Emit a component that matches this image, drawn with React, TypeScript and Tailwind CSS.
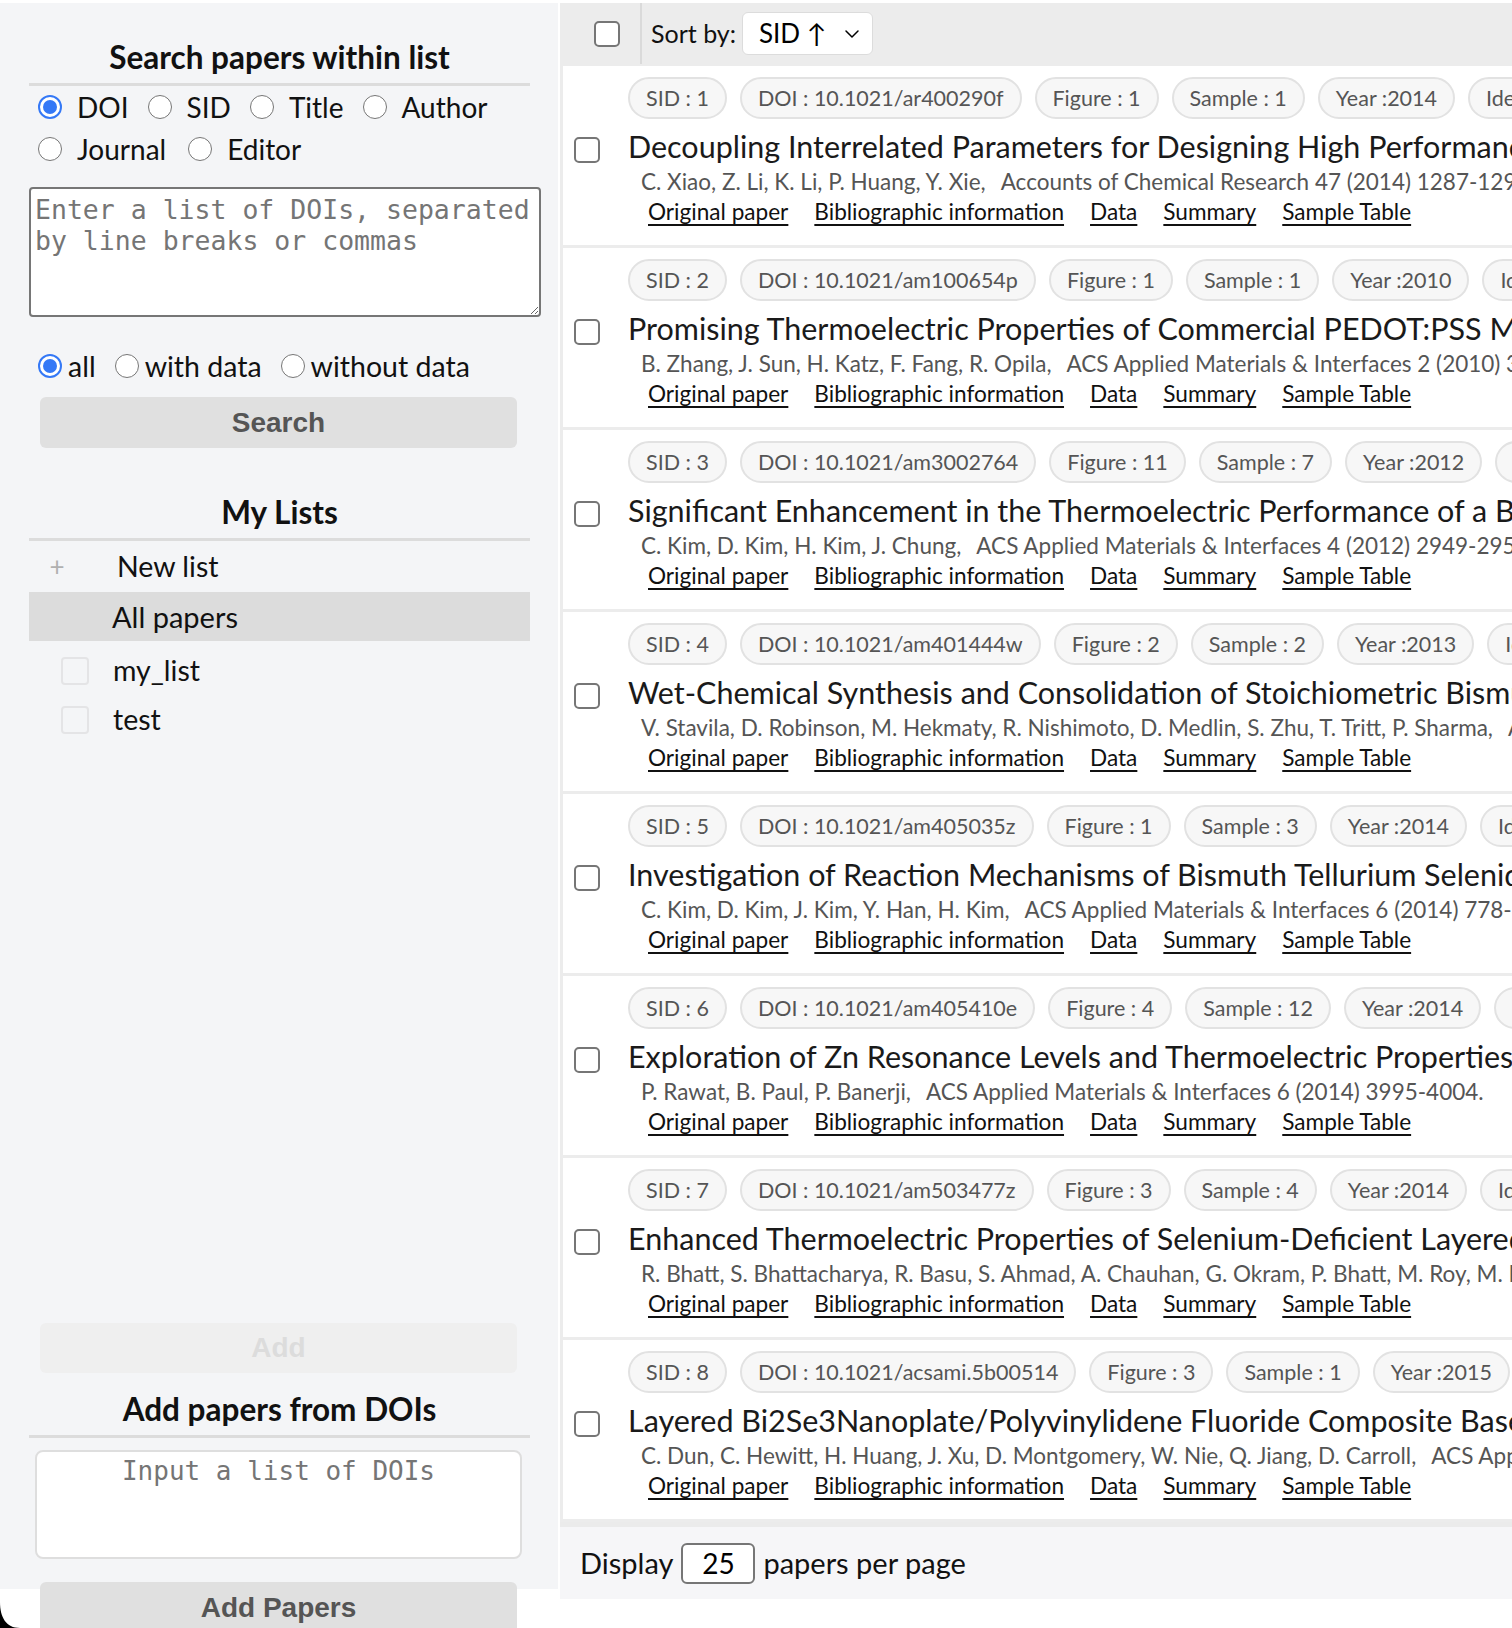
import React from 'react'
import {ChevronDown} from 'lucide-react'

type Paper = {
  sid: number
  doi: string
  figure: number
  sample: number
  year: number
  title: string
  authors: string
  journal: string
}

const papers: Paper[] = [
  {sid: 1, doi: '10.1021/ar400290f', figure: 1, sample: 1, year: 2014, title: 'Decoupling Interrelated Parameters for Designing High Performance Thermoelectric Materials', authors: 'C. Xiao, Z. Li, K. Li, P. Huang, Y. Xie,', journal: 'Accounts of Chemical Research 47 (2014) 1287-1295.'},
  {sid: 2, doi: '10.1021/am100654p', figure: 1, sample: 1, year: 2010, title: 'Promising Thermoelectric Properties of Commercial PEDOT:PSS Materials and Their Bi2Te3 Powder Composites', authors: 'B. Zhang, J. Sun, H. Katz, F. Fang, R. Opila,', journal: 'ACS Applied Materials & Interfaces 2 (2010) 3170-3178.'},
  {sid: 3, doi: '10.1021/am3002764', figure: 11, sample: 7, year: 2012, title: 'Significant Enhancement in the Thermoelectric Performance of a Bismuth Telluride Nanocompound', authors: 'C. Kim, D. Kim, H. Kim, J. Chung,', journal: 'ACS Applied Materials & Interfaces 4 (2012) 2949-2954.'},
  {sid: 4, doi: '10.1021/am401444w', figure: 2, sample: 2, year: 2013, title: 'Wet-Chemical Synthesis and Consolidation of Stoichiometric Bismuth Telluride Nanoparticles', authors: 'V. Stavila, D. Robinson, M. Hekmaty, R. Nishimoto, D. Medlin, S. Zhu, T. Tritt, P. Sharma,', journal: 'ACS Applied Materials & Interfaces 5 (2013) 6678-6686.'},
  {sid: 5, doi: '10.1021/am405035z', figure: 1, sample: 3, year: 2014, title: 'Investigation of Reaction Mechanisms of Bismuth Tellurium Selenide Nanocomposite', authors: 'C. Kim, D. Kim, J. Kim, Y. Han, H. Kim,', journal: 'ACS Applied Materials & Interfaces 6 (2014) 778-785.'},
  {sid: 6, doi: '10.1021/am405410e', figure: 4, sample: 12, year: 2014, title: 'Exploration of Zn Resonance Levels and Thermoelectric Properties in I-Doped ZnO/Zn3P2', authors: 'P. Rawat, B. Paul, P. Banerji,', journal: 'ACS Applied Materials & Interfaces 6 (2014) 3995-4004.'},
  {sid: 7, doi: '10.1021/am503477z', figure: 3, sample: 4, year: 2014, title: 'Enhanced Thermoelectric Properties of Selenium-Deficient Layered TiSe2-x', authors: 'R. Bhatt, S. Bhattacharya, R. Basu, S. Ahmad, A. Chauhan, G. Okram, P. Bhatt, M. Roy, M. Navaneethan,', journal: 'ACS Applied Materials & Interfaces 6 (2014) 18619-18625.'},
  {sid: 8, doi: '10.1021/acsami.5b00514', figure: 3, sample: 1, year: 2015, title: 'Layered Bi2Se3Nanoplate/Polyvinylidene Fluoride Composite Based n-type Thermoelectric Fabrics', authors: 'C. Dun, C. Hewitt, H. Huang, J. Xu, D. Montgomery, W. Nie, Q. Jiang, D. Carroll,', journal: 'ACS Applied Materials & Interfaces 7 (2015) 7054-7059.'},
]

function Radio({checked}: {checked?: boolean}) {
  if (checked) {
    return (
      <span className="flex h-[24px] w-[24px] shrink-0 items-center justify-center rounded-full border-[2px] border-[#3478f6] bg-white">
        <span className="h-[14px] w-[14px] rounded-full bg-[#3478f6]" />
      </span>
    )
  }
  return <span className="h-[24px] w-[24px] shrink-0 rounded-full border-[1.5px] border-[#767676] bg-white" />
}

function RadioItem({label, checked, gap = 'gap-[15px]', mr = 'mr-[19px]'}: {label: string; checked?: boolean; gap?: string; mr?: string}) {
  return (
    <label className={`flex items-center ${gap} ${mr}`}>
      <Radio checked={checked} />
      <span>{label}</span>
    </label>
  )
}

function Chip({children}: {children: React.ReactNode}) {
  return (
    <span className="flex h-[42px] shrink-0 items-center rounded-full border-[2px] border-[#e2e2e2] bg-[#f7f7f7] px-[16px] text-[21.5px] text-[#555]">
      {children}
    </span>
  )
}

function PaperCard({paper}: {paper: Paper}) {
  return (
    <div className="flex h-[182px] flex-col overflow-hidden border-b-[3px] border-[#ececec] bg-white pl-[11px]">
      <div className="ml-[54px] mt-[11px] flex h-[42px] gap-[13px] whitespace-nowrap">
        <Chip>SID : {paper.sid}</Chip>
        <Chip>DOI : {paper.doi}</Chip>
        <Chip>Figure : {paper.figure}</Chip>
        <Chip>Sample : {paper.sample}</Chip>
        <Chip>Year :{paper.year}</Chip>
        <Chip>Identifier</Chip>
      </div>
      <div className="mt-[7px] flex h-[40px] items-center whitespace-nowrap">
        <span className="mt-[8px] h-[26px] w-[26px] shrink-0 rounded-[5px] border-[2px] border-[#767676] bg-white" />
        <span className="ml-[28px] text-[30.5px] leading-[40px] text-[#1a1a1a]">{paper.title}</span>
      </div>
      <div className="ml-[67px] mt-[1px] flex h-[30px] items-center gap-[15px] whitespace-nowrap text-[22.5px] text-[#555]">
        <span>{paper.authors}</span>
        <span>{paper.journal}</span>
      </div>
      <div className="ml-[74px] flex h-[30px] items-center gap-[26px] whitespace-nowrap text-[22.6px] text-[#111]">
        <a className="underline underline-offset-[4px]">Original paper</a>
        <a className="underline underline-offset-[4px]">Bibliographic information</a>
        <a className="underline underline-offset-[4px]">Data</a>
        <a className="underline underline-offset-[4px]">Summary</a>
        <a className="underline underline-offset-[4px]">Sample Table</a>
      </div>
    </div>
  )
}

export default function App() {
  return (
    <div className="relative flex h-[1628px] w-[1512px] overflow-hidden bg-white pt-[3px] font-['Lato',sans-serif] text-[#111]">
      {/* sidebar */}
      <aside className="flex h-[1586px] w-[558px] shrink-0 flex-col bg-[#f4f5f7] pl-[29px] pr-[28px] [&>*]:shrink-0">
        <h2 className="mt-[36px] h-[36px] text-center text-[31.5px] font-bold leading-[36px]">Search papers within list</h2>
        <div className="mt-[8px] h-[3px] bg-[#dcdcdc]" />
        <div className="flex h-[42px] items-center pl-[9px] text-[28px]">
          <RadioItem label="DOI" checked />
          <RadioItem label="SID" />
          <RadioItem label="Title" />
          <RadioItem label="Author" />
        </div>
        <div className="flex h-[42px] items-center pl-[9px] text-[28px]">
          <RadioItem label="Journal" mr="mr-[22px]" />
          <RadioItem label="Editor" />
        </div>
        <textarea
          className="mt-[17px] h-[130px] w-[512px] resize-y rounded-[4px] border-[2px] border-[#767676] bg-white px-[4px] pt-[5px] font-['DejaVu_Sans_Mono',monospace] text-[26.5px] leading-[31px] placeholder:text-[#757575]"
          placeholder="Enter a list of DOIs, separated by line breaks or commas"
        />
        <div className="mt-[29px] flex h-[40px] items-center pl-[9px] text-[28.5px]">
          <RadioItem label="all" checked gap="gap-[6px]" mr="mr-[19px]" />
          <RadioItem label="with data" gap="gap-[6px]" mr="mr-[19px]" />
          <RadioItem label="without data" gap="gap-[6px]" mr="mr-[19px]" />
        </div>
        <button className="ml-[11px] mt-[11px] h-[51px] w-[477px] rounded-[6px] bg-[#e0e0e0] font-['Liberation_Sans',Arial,sans-serif] text-[28px] font-bold text-[#555]">
          Search
        </button>

        <h2 className="mt-[46px] h-[36px] text-center text-[31.5px] font-bold leading-[36px]">My Lists</h2>
        <div className="mt-[8px] h-[3px] bg-[#dcdcdc]" />
        <div className="flex h-[51px] items-center text-[28.5px]">
          <span className="ml-[18px] w-[20px] text-center text-[26px] text-[#b0b0b0]">+</span>
          <span className="ml-[50px]">New list</span>
        </div>
        <div className="flex h-[49px] items-center bg-[#dcdcdc] pl-[83px] text-[29px]">All papers</div>
        <div className="mt-[5px] flex h-[49px] items-center pl-[32px] text-[28.5px]">
          <span className="h-[28px] w-[28px] rounded-[4px] border-[2px] border-[#e4e4e6]" />
          <span className="ml-[24px]">my_list</span>
        </div>
        <div className="flex h-[49px] items-center pl-[32px] text-[28.5px]">
          <span className="h-[28px] w-[28px] rounded-[4px] border-[2px] border-[#e4e4e6]" />
          <span className="ml-[24px]">test</span>
        </div>

        <button className="ml-[11px] mt-[579px] h-[50px] w-[477px] rounded-[6px] bg-[#efefef] font-['Liberation_Sans',Arial,sans-serif] text-[28px] font-bold text-[#dcdcdc]">
          Add
        </button>
        <h2 className="mt-[18px] h-[36px] text-center text-[31.5px] font-bold leading-[36px]">Add papers from DOIs</h2>
        <div className="mt-[8px] h-[3px] bg-[#dcdcdc]" />
        <textarea
          className="ml-[6px] mt-[12px] h-[109px] w-[487px] resize-none rounded-[8px] border-[2px] border-[#dedede] bg-white px-[4px] pt-[4px] text-center font-['DejaVu_Sans_Mono',monospace] text-[26px] leading-[31px] placeholder:text-[#757575]"
          placeholder="Input a list of DOIs"
        />
        <button className="ml-[11px] mt-[23px] h-[51px] w-[477px] rounded-[6px] bg-[#e0e0e0] font-['Liberation_Sans',Arial,sans-serif] text-[28px] font-bold text-[#555]">
          Add Papers
        </button>
      </aside>

      {/* main list */}
      <main className="ml-[2px] flex min-w-0 flex-1 flex-col self-start">
        <div className="flex h-[61px] shrink-0 items-center bg-[#ececec]">
          <span className="ml-[34px] h-[26px] w-[26px] rounded-[5px] border-[2px] border-[#767676] bg-white" />
          <span className="ml-[20px] h-full w-[2px] bg-[#dadada]" />
          <span className="ml-[9px] text-[25px]">Sort by:</span>
          <div className="ml-[6px] flex h-[43px] w-[131px] items-center justify-between rounded-[6px] border-[1.5px] border-[#dcdcdc] bg-white pl-[16px] pr-[8px] text-[26px] text-black">
            <span>SID ↑</span>
            <ChevronDown size={24} strokeWidth={1.5} />
          </div>
        </div>
        <div className="border-l-[3px] border-t-[2px] border-[#ececec]">
          {papers.map(p => (
            <PaperCard key={p.sid} paper={p} />
          ))}
        </div>
        <div className="flex h-[77px] items-center border-t-[5px] border-[#ebebeb] bg-[#f6f6f8] pl-[20px] text-[29px]">
          <span>Display</span>
          <span className="ml-[8px] flex h-[41px] w-[74px] items-center justify-center rounded-[6px] border-[2px] border-[#767676] bg-white text-[28px] text-black">25</span>
          <span className="ml-[8px]">papers per page</span>
        </div>
      </main>

      {/* screen corner */}
      <svg className="absolute bottom-0 left-0" width="20" height="26" viewBox="0 0 20 26">
        <path d="M0 0 C0 15 6 26 20 26 L0 26 Z" fill="#000" />
      </svg>
    </div>
  )
}
